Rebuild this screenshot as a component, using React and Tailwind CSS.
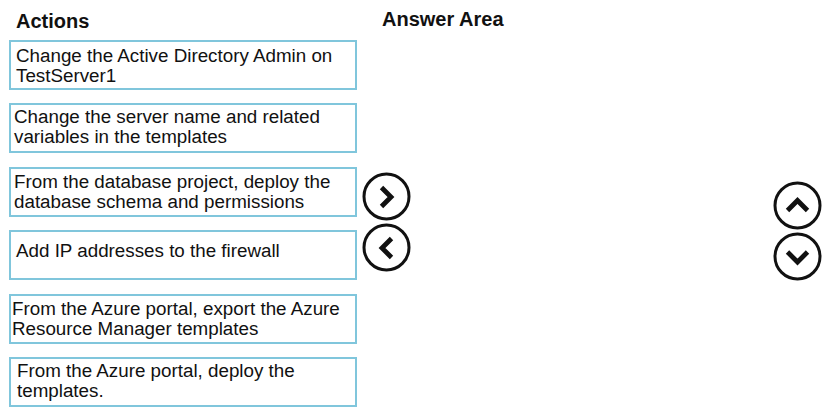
import React from "react";

const actions = [
  { lines: ["Change the Active Directory Admin on", "TestServer1"], pad: "pl-[5px] pt-[4px]" },
  { lines: ["Change the server name and related", "variables in the templates"], pad: "pl-[3px] pt-[2px]" },
  { lines: ["From the database project, deploy the", "database schema and permissions"], pad: "pl-[3px] pt-[3px]" },
  { lines: ["Add IP addresses to the firewall"], pad: "pl-[5px] pt-[9px]" },
  { lines: ["From the Azure portal, export the Azure", "Resource Manager templates"], pad: "pl-[1px] pt-[3px]" },
  { lines: ["From the Azure portal, deploy the", "templates."], pad: "pl-[6px] pt-[2px]" },
];

function CircleButton({ d }) {
  return (
    <svg width="49" height="49" viewBox="0 0 49 49" className="block">
      <circle cx="24.5" cy="24.5" r="22.5" fill="none" stroke="#111" strokeWidth="3" />
      <path d={d} fill="none" stroke="#111" strokeWidth="4.8" strokeLinejoin="miter" strokeLinecap="butt" />
    </svg>
  );
}

export default function App() {
  return (
    <div className="flex h-[417px] w-[836px] overflow-hidden bg-white text-[#111] font-['Liberation_Sans',Arial,sans-serif]">
      {/* Actions column */}
      <div className="flex w-[357px] shrink-0 flex-col pl-[9px] pt-[10px]">
        <h2 className="pl-[7px] text-[20px] font-bold leading-[23px]">Actions</h2>
        <div className="mt-[7px] flex flex-col gap-[13.4px]">
          {actions.map((a, i) => (
            <div
              key={i}
              className={`h-[50px] w-[348px] border-2 border-[#80c6dc] text-[18.8px] leading-[20px] whitespace-nowrap ${a.pad}`}
            >
              {a.lines.map((l, j) => (
                <div key={j}>{l}</div>
              ))}
            </div>
          ))}
        </div>
      </div>

      {/* Move buttons + answer heading */}
      <div className="flex w-[60px] shrink-0 flex-col pl-[5px] pt-[8px]">
        <h2 className="whitespace-nowrap pl-[20px] text-[20px] font-bold leading-[23px]">Answer Area</h2>
        <div className="mt-[141px] flex flex-col gap-[2px]">
          <CircleButton d="M19.5 15.5 L29 25 L19.5 34.5" />
          <CircleButton d="M29.5 15.5 L20 25 L29.5 34.5" />
        </div>
      </div>

      {/* Answer area with reorder buttons */}
      <div className="flex flex-1 flex-col items-end pr-[14px] pt-[181px]">
        <div className="flex flex-col gap-[2px]">
          <CircleButton d="M14.5 29.5 L24.5 19.5 L34.5 29.5" />
          <CircleButton d="M14.5 20 L24.5 30 L34.5 20" />
        </div>
      </div>
    </div>
  );
}
